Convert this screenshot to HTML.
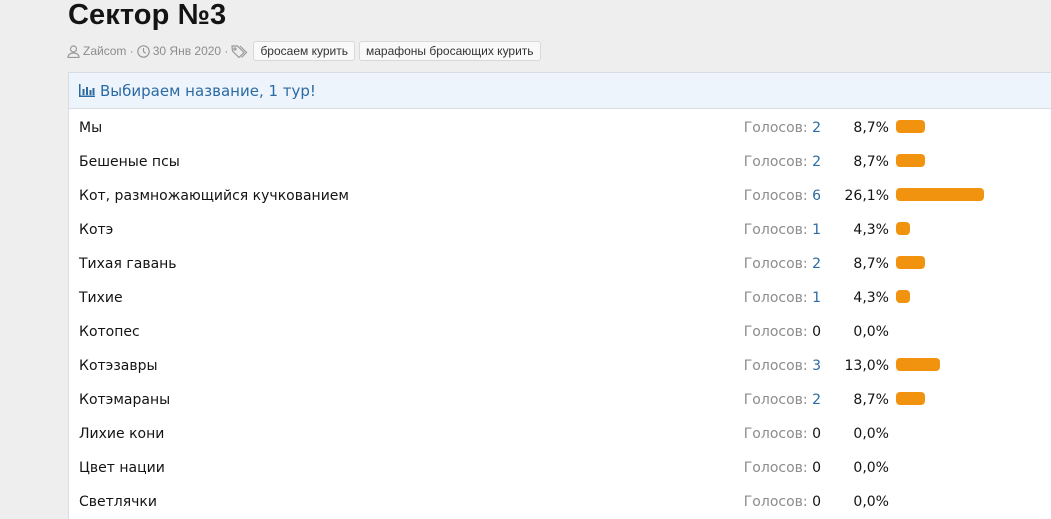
<!DOCTYPE html>
<html><head><meta charset="utf-8"><style>
html,body{margin:0;width:1051px;height:519px;overflow:hidden}
body{background:#eeeeee;font-family:"DejaVu Sans","Liberation Sans",sans-serif;position:relative}
h1{position:absolute;left:68px;top:-1px;margin:0;font-family:"Liberation Sans",sans-serif;font-size:29px;font-weight:bold;color:#141414;letter-spacing:0.1px}
.meta{position:absolute;left:67px;top:41px;font-size:12px;font-family:"Liberation Sans",sans-serif;color:#8c8c8c;display:flex;align-items:center;white-space:nowrap}
.tag{display:inline-block;border:1px solid #d8d8d8;background:#f9f9f9;border-radius:3px;padding:2px 6px;color:#333;font-size:12px;margin-left:4px;line-height:14px}
.panel{position:absolute;left:68px;top:72px;width:1000px;height:460px;background:#fff;border:1px solid #d8dde3}
.hdr{height:35px;background:#edf4fb;border-bottom:1px solid #d8dde3;color:#2b6aa3;font-size:15px;line-height:36px;padding-left:10px}
.row{position:absolute;left:10px;height:34px;line-height:20px;font-size:14px;color:#141414;width:990px}
.v{position:absolute;right:248px;top:0;color:#8c8c8c;white-space:nowrap}
.v b{font-weight:normal;color:#2b6aa3}
.v i{font-style:normal;color:#141414}
.p{position:absolute;right:180px;top:0;white-space:nowrap}
.bar{position:absolute;left:817px;top:2px;height:13px;background:#f2930f;border-radius:4px}
</style></head><body>
<h1>Сектор №3</h1>
<div class="meta">
<svg width="13" height="13" viewBox="0 0 13 13" fill="none" stroke="#999" stroke-width="1.2"><circle cx="6.5" cy="4" r="3"/><path d="M1 12.5c0-3 2.5-4.5 5.5-4.5s5.5 1.5 5.5 4.5z"/></svg>
<span style="margin-left:3px">Zaйcom ·</span>
<svg style="margin-left:3px" width="13" height="13" viewBox="0 0 13 13" fill="none" stroke="#999" stroke-width="1.2"><circle cx="6.5" cy="6.5" r="5.7"/><path d="M6.5 3v3.7l2.3 1.5"/></svg>
<span style="margin-left:3px">30 Янв 2020 ·</span>
<svg style="margin-left:3px" width="18" height="13" viewBox="0 0 18 13" fill="none" stroke="#999" stroke-width="1.2"><path d="M1 1h5.5l6.5 6.5-5 5L1.5 6z"/><circle cx="4" cy="4" r="1"/><path d="M9 1l6.5 6.5-5 5"/></svg>
<span class="tag">бросаем курить</span><span class="tag">марафоны бросающих курить</span>
</div>
<div class="panel">
<div class="hdr"><svg width="16" height="13" viewBox="0 0 16 13" style="vertical-align:-1px;margin-right:5px" fill="#2b6aa3"><rect x="0" y="0" width="1.5" height="13"/><rect x="0" y="11.5" width="16" height="1.5"/><rect x="3.5" y="5" width="2" height="6"/><rect x="7" y="3" width="2" height="8"/><rect x="10.5" y="6" width="2" height="5"/><rect x="13.5" y="4" width="2" height="7"/></svg>Выбираем название, 1 тур!</div>
</div>
<div style="position:absolute;left:69px;top:1px">
<div class="row" style="top:117px">Мы<span class="v">Голосов: <b>2</b></span><span class="p">8,7%</span><span class="bar" style="width:29px"></span></div>
<div class="row" style="top:151px">Бешеные псы<span class="v">Голосов: <b>2</b></span><span class="p">8,7%</span><span class="bar" style="width:29px"></span></div>
<div class="row" style="top:185px">Кот, размножающийся кучкованием<span class="v">Голосов: <b>6</b></span><span class="p">26,1%</span><span class="bar" style="width:88px"></span></div>
<div class="row" style="top:219px">Котэ<span class="v">Голосов: <b>1</b></span><span class="p">4,3%</span><span class="bar" style="width:14px"></span></div>
<div class="row" style="top:253px">Тихая гавань<span class="v">Голосов: <b>2</b></span><span class="p">8,7%</span><span class="bar" style="width:29px"></span></div>
<div class="row" style="top:287px">Тихие<span class="v">Голосов: <b>1</b></span><span class="p">4,3%</span><span class="bar" style="width:14px"></span></div>
<div class="row" style="top:321px">Котопес<span class="v">Голосов: <i>0</i></span><span class="p">0,0%</span></div>
<div class="row" style="top:355px">Котэзавры<span class="v">Голосов: <b>3</b></span><span class="p">13,0%</span><span class="bar" style="width:44px"></span></div>
<div class="row" style="top:389px">Котэмараны<span class="v">Голосов: <b>2</b></span><span class="p">8,7%</span><span class="bar" style="width:29px"></span></div>
<div class="row" style="top:423px">Лихие кони<span class="v">Голосов: <i>0</i></span><span class="p">0,0%</span></div>
<div class="row" style="top:457px">Цвет нации<span class="v">Голосов: <i>0</i></span><span class="p">0,0%</span></div>
<div class="row" style="top:491px">Светлячки<span class="v">Голосов: <i>0</i></span><span class="p">0,0%</span></div>
</div>
</body></html>
